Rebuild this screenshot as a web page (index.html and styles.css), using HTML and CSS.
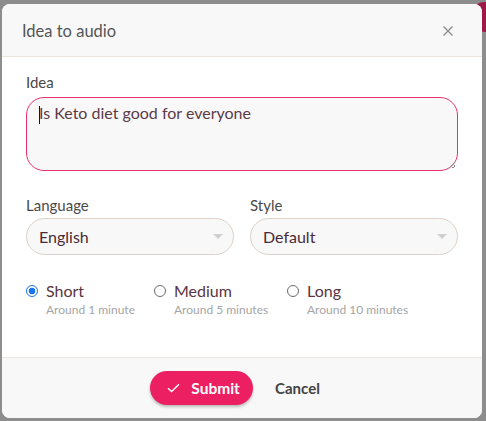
FILE: index.html
```html
<!DOCTYPE html>
<html>
<head>
<meta charset="utf-8">
<link rel="stylesheet" href="styles.css">
</head>
<body>
<div class="backdrop">
  <span class="bg-dot"></span>
  <div class="modal">
    <div class="header">
      <span class="title">Idea to audio</span>
      <svg class="close" width="12" height="12" viewBox="0 0 12 12"><path d="M1.5 1.5L10.5 10.5M10.5 1.5L1.5 10.5" stroke="#8a8a8a" stroke-width="1.3" fill="none"/></svg>
    </div>
    <div class="body">
      <label class="label">Idea</label>
      <div class="textarea"><span class="caret"></span>Is Keto diet good for everyone<span class="grip"></span></div>
      <div class="row">
        <div class="field">
          <label class="label">Language</label>
          <div class="select"><span>English</span><span class="arrow"></span></div>
        </div>
        <div class="field">
          <label class="label">Style</label>
          <div class="select"><span>Default</span><span class="arrow"></span></div>
        </div>
      </div>
      <div class="radios">
        <div class="radio-item r1">
          <span class="radio checked"></span>
          <div><div class="rlabel">Short</div><div class="rsub">Around 1 minute</div></div>
        </div>
        <div class="radio-item r2">
          <span class="radio"></span>
          <div><div class="rlabel">Medium</div><div class="rsub">Around 5 minutes</div></div>
        </div>
        <div class="radio-item">
          <span class="radio"></span>
          <div><div class="rlabel">Long</div><div class="rsub">Around 10 minutes</div></div>
        </div>
      </div>
    </div>
    <div class="footer">
      <button class="submit"><svg width="13" height="10" viewBox="0 0 13 10"><path d="M1 5.2L4.6 8.6L12 1.2" stroke="#fff" stroke-width="1.4" fill="none"/></svg>Submit</button>
      <button class="cancel">Cancel</button>
    </div>
  </div>
</div>
</body>
</html>
```
FILE: styles.css
```css
html, body { margin: 0; padding: 0; }
body {
  background: #8d8d8d;
  font-family: "Lato", "Noto Sans", sans-serif;
  width: 486px;
  height: 421px;
  overflow: hidden;
}
.backdrop {
  position: relative;
  padding: 4px 4px 3px 2px;
}
.bg-dot {
  position: absolute;
  right: -14px;
  top: 2px;
  width: 30px;
  height: 30px;
  border-radius: 50%;
  background: #a11848;
}
.modal {
  position: relative;
  width: 480px;
  height: 414px;
  background: #fff;
  border-radius: 8px;
  overflow: hidden;
  display: flex;
  flex-direction: column;
}
.header {
  height: 52px;
  background: #f8f8f8;
  border-bottom: 1px solid #ebe5df;
  display: flex;
  align-items: center;
  justify-content: space-between;
  padding: 0 28px 0 20px;
  flex: none;
}
.title {
  font-size: 16.5px;
  color: #555;
  padding-top: 1px;
}
.close { margin-top: 1px; }
.body {
  flex: 1;
  padding: 15px 24px 0 24px;
}
.label {
  display: block;
  font-size: 15px;
  line-height: 20px;
  color: #4a4a4a;
}
.textarea {
  position: relative;
  margin-top: 5px;
  border: 1px solid #e8326e;
  border-radius: 18px;
  background: #f8f8f8;
  padding: 6px 12px;
  box-sizing: border-box;
  height: 74px;
  font-size: 16px;
  line-height: 18px;
  color: #5c3b47;
}
.caret {
  display: inline-block;
  width: 1px;
  height: 18px;
  background: #2a0a15;
  vertical-align: top;
  margin-top: 2px;
  margin-right: -1px;
}
.grip {
  position: absolute;
  right: 2px;
  bottom: 2px;
  width: 6px;
  height: 6px;
  background: linear-gradient(135deg, transparent 45%, #888 45%, #888 55%, transparent 55%, transparent 75%, #888 75%, #888 85%, transparent 85%);
}
.row {
  display: flex;
  gap: 16px;
  margin-top: 24px;
}
.field { flex: 1; }
.field .label { margin-bottom: 3px; }
.select {
  height: 37px;
  border: 1px solid #dcd2ca;
  border-radius: 19px;
  background: #f8f8f8;
  box-sizing: border-box;
  display: flex;
  align-items: center;
  justify-content: space-between;
  padding: 0 10px 0 12px;
  font-size: 16px;
  color: #4b2a36;
}
.arrow {
  width: 0;
  height: 0;
  border-left: 5px solid transparent;
  border-right: 5px solid transparent;
  border-top: 5px solid #cfcfcf;
}
.radios {
  display: flex;
  margin-top: 26px;
}
.radio-item {
  display: flex;
  gap: 8px;
}
.r1 { width: 128px; }
.r2 { width: 133px; }
.radio {
  width: 12px;
  height: 12px;
  border: 1px solid #6b6b6b;
  border-radius: 50%;
  box-sizing: border-box;
  margin-top: 4px;
  background: #fff;
  flex: none;
}
.radio.checked {
  border: 1.5px solid #1a73f0;
  background: radial-gradient(circle, #1a73f0 0 3.2px, #fff 3.6px);
}
.rlabel {
  font-size: 16px;
  line-height: 20px;
  color: #5a3542;
}
.rsub {
  font-size: 12px;
  line-height: 16px;
  color: #a5a5a5;
  margin-top: 1px;
}
.footer {
  height: 60px;
  flex: none;
  background: #f8f8f8;
  border-top: 1px solid #ebe5df;
  display: flex;
  align-items: center;
  justify-content: center;
  gap: 22px;
  padding-right: 14px;
}
.submit {
  height: 34px;
  width: 103px;
  border: none;
  border-radius: 17px;
  background: #ec1f63;
  color: #fff;
  font-family: inherit;
  font-weight: 700;
  font-size: 15.5px;
  display: flex;
  align-items: center;
  justify-content: center;
  gap: 11px;
  box-shadow: 0 2px 3px rgba(0,0,0,0.25);
  padding: 0 0 0 4px;
}
.cancel {
  border: none;
  background: none;
  font-family: inherit;
  font-weight: 700;
  font-size: 15px;
  color: #444;
  padding: 0;
}
```
